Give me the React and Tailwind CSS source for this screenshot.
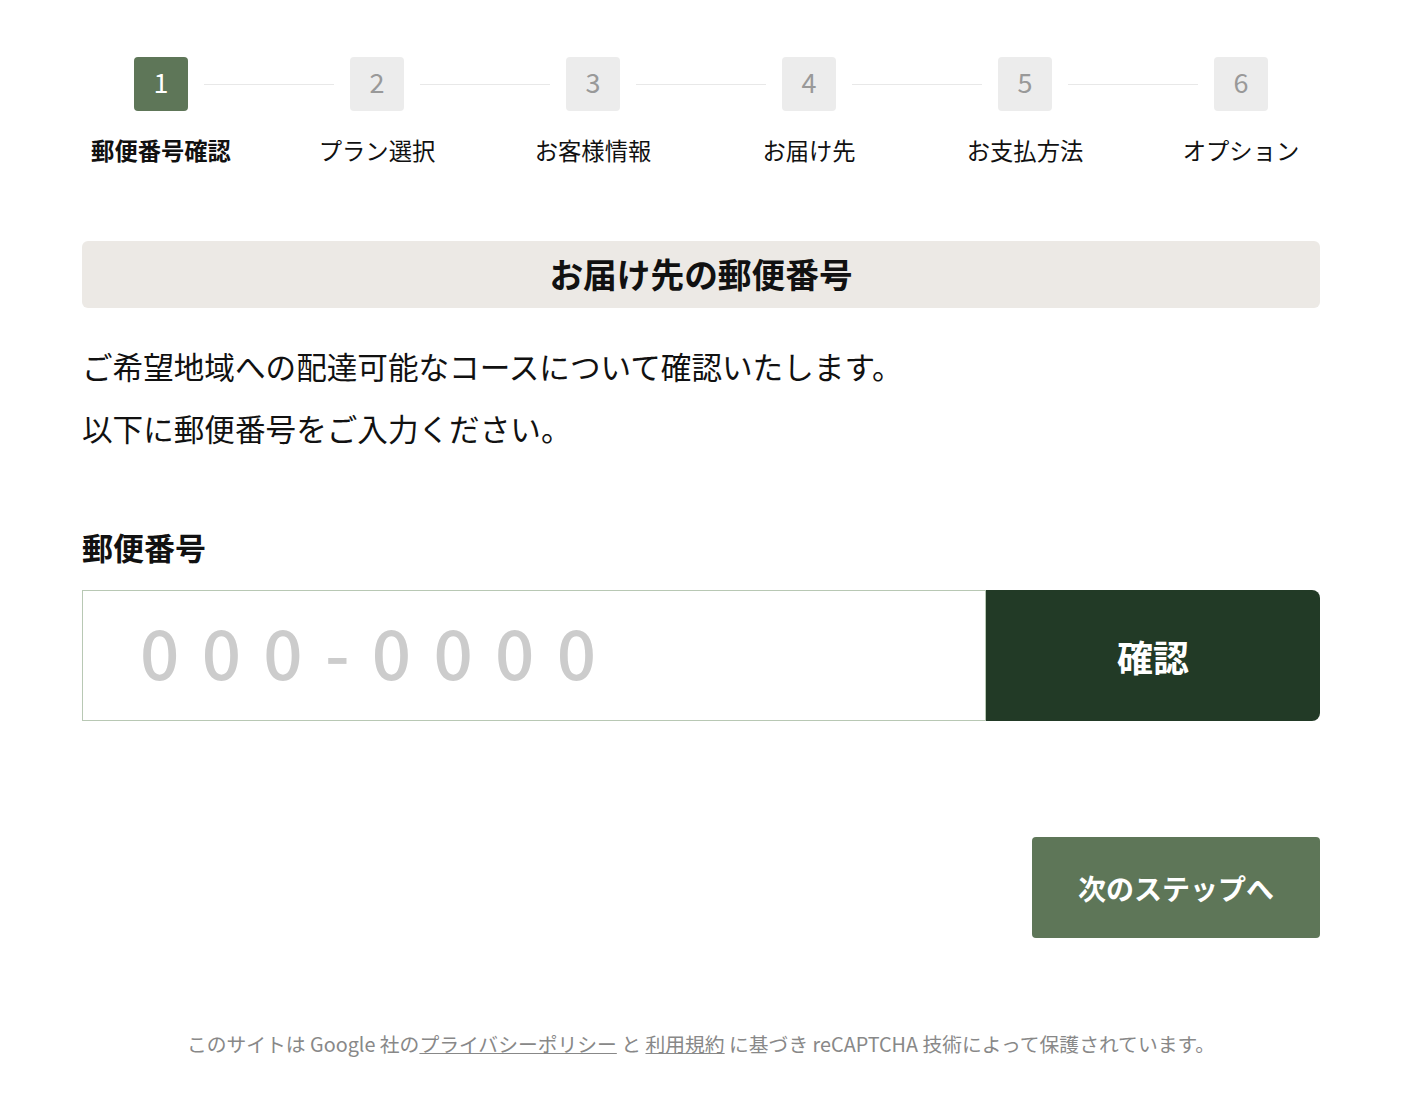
import React from "react";

const steps = ["郵便番号確認", "プラン選択", "お客様情報", "お届け先", "お支払方法", "オプション"];

export default function App() {
  return (
    <div
      className="w-[1402px] min-h-[1109px] bg-white text-[#111]"
      style={{ fontFamily: '"Noto Sans CJK JP", "Noto Sans", sans-serif' }}
    >
      {/* Stepper */}
      <div className="pt-[57px]">
        <div className="flex items-center justify-center">
          {steps.map((s, i) => (
            <React.Fragment key={s}>
              <div
                className={
                  i === 0
                    ? "w-[54px] h-[54px] rounded-[4px] bg-[#5e7658] text-white flex items-center justify-center text-[27px] leading-none pb-[5px]"
                    : "w-[54px] h-[54px] rounded-[4px] bg-[#ececec] text-[#999] flex items-center justify-center text-[27px] leading-none pb-[5px]"
                }
              >
                {i + 1}
              </div>
              {i < steps.length - 1 && <div className="w-[130px] h-px mx-[16px] bg-[#e8e8e8]" />}
            </React.Fragment>
          ))}
        </div>
        <div className="mt-[22px] flex justify-center">
          {steps.map((s, i) => (
            <div
              key={s}
              className={
                i === 0
                  ? "w-[216px] text-center text-[23.3px] leading-[34px] font-bold"
                  : "w-[216px] text-center text-[23.3px] leading-[34px]"
              }
            >
              {s}
            </div>
          ))}
        </div>
      </div>

      <div className="w-[1238px] mx-auto mt-[74px]">
        <div className="h-[67px] rounded-[6px] bg-[#ece9e5] flex items-center justify-center text-[33.7px] font-bold text-[#111]">
          お届け先の郵便番号
        </div>

        <div className="mt-[27px] text-[30.6px] leading-[62px]">
          <p>ご希望地域への配達可能なコースについて確認いたします。</p>
          <p>以下に郵便番号をご入力ください。</p>
        </div>

        <div className="mt-[65px] text-[31px] leading-[45px] font-bold">郵便番号</div>

        <div className="mt-[21px] flex h-[131px]">
          <input
            type="text"
            placeholder="000-0000"
            className="flex-1 min-w-0 h-full border border-[#b8c8b4] pl-[57px] pb-[12px] text-[69px] font-medium tracking-[22.3px] placeholder:text-[#cccccc] outline-none bg-white"
            style={{ fontFamily: '"Noto Sans CJK JP", "Noto Sans", sans-serif' }}
          />
          <button className="w-[334px] h-full rounded-r-[8px] bg-[#223a26] text-white text-[36px] font-bold">
            確認
          </button>
        </div>

        <div className="mt-[116px] flex justify-end">
          <button className="w-[288px] h-[101px] rounded-[4px] bg-[#5e7658] text-white text-[28px] font-bold">
            次のステップへ
          </button>
        </div>

        <p className="mt-[91px] text-center text-[19.8px] leading-[30px] text-[#888]">
          このサイトは Google 社の<span className="underline">プライバシーポリシー</span> と{" "}
          <span className="underline">利用規約</span> に基づき reCAPTCHA 技術によって保護されています。
        </p>
      </div>
    </div>
  );
}
